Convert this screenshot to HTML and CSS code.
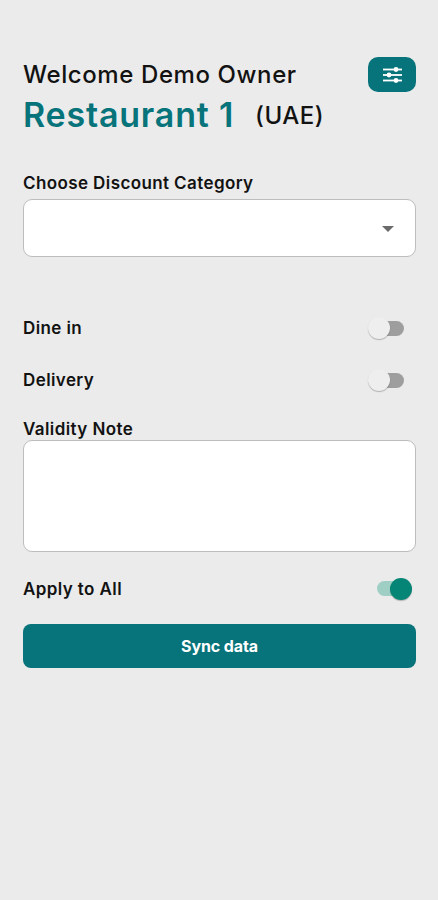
FILE: index.html
```html
<!DOCTYPE html>
<html lang="en">
<head>
  <meta charset="UTF-8">
  <meta name="viewport" content="width=device-width, initial-scale=1.0">
  <title>Restaurant 1</title>
  <link rel="stylesheet" href="styles.css">
</head>
<body>
  <header class="header">
    <div>
      <div class="welcome">Welcome Demo Owner</div>
      <div class="restaurant">
        <h1 class="name">Restaurant 1</h1>
        <span class="country">(UAE)</span>
      </div>
    </div>
    <button class="filter-btn" aria-label="Settings">
      <svg width="19" height="16" viewBox="0 0 19 16" fill="#fff">
        <rect x="0" y="1.6" width="19" height="1.8"/>
        <rect x="0" y="7.1" width="19" height="1.8"/>
        <rect x="0" y="12.6" width="19" height="1.8"/>
        <circle cx="13" cy="2.5" r="2.4"/>
        <circle cx="6" cy="8" r="2.4"/>
        <circle cx="13" cy="13.5" r="2.4"/>
      </svg>
    </button>
  </header>

  <!-- Discount category -->
  <div class="label category-label">Choose Discount Category</div>
  <div class="select"><span class="arrow"></span></div>

  <!-- Order types -->
  <div class="row dine-in">
    <span class="label">Dine in</span>
    <span class="switch"></span>
  </div>
  <div class="row">
    <span class="label">Delivery</span>
    <span class="switch"></span>
  </div>

  <div class="label note-label">Validity Note</div>
  <textarea class="note" aria-label="Validity Note"></textarea>

  <div class="row apply">
    <span class="label">Apply to All</span>
    <span class="switch on"></span>
  </div>
  <button class="sync-btn">Sync data</button>
</body>
</html>
```

FILE: styles.css
```css
* {
  box-sizing: border-box;
}
body {
  margin: 0;
  padding: 57px 22px 0 23px;
  min-height: 100vh;
  background-color: #ebebeb;
  color: #121212;
  font-family: Inter, "Liberation Sans", sans-serif;
}
.header {
  display: flex;
  justify-content: space-between;
  align-items: flex-start;
  height: 80px;
}
.welcome {
  font-size: 24px;
  font-weight: 500;
  line-height: 36px;
  letter-spacing: 0.6px;
  white-space: nowrap;
}
.restaurant {
  display: flex;
  align-items: center;
  gap: 21px;
  line-height: 44px;
  white-space: nowrap;
}
.name {
  margin: 0;
  font-size: 34px;
  font-weight: 600;
  letter-spacing: 0.8px;
  color: #07737a;
}
.country {
  padding-top: 2px;
  font-size: 24px;
  font-weight: 500;
  line-height: 42px;
  letter-spacing: 0.5px;
}
.filter-btn {
  display: flex;
  align-items: center;
  justify-content: center;
  flex: none;
  width: 48px;
  height: 35px;
  padding: 0 0 0 1px;
  border: none;
  border-radius: 10px;
  background-color: #07737a;
}
.label {
  font-size: 17px;
  font-weight: 600;
  line-height: 24px;
  letter-spacing: 0.4px;
  white-space: nowrap;
}
.category-label {
  margin-top: 34px;
}
.select {
  display: flex;
  align-items: center;
  justify-content: flex-end;
  height: 58px;
  margin-top: 4px;
  padding-right: 21px;
  border: 1px solid #bdbdbd;
  border-radius: 9px;
  background-color: #fff;
}
.arrow {
  margin-top: 1px;
  border: 6px solid transparent;
  border-top-color: #6b6b6b;
  border-bottom: none;
}
.row {
  display: flex;
  align-items: center;
  justify-content: space-between;
  height: 52px;
}
.dine-in {
  margin-top: 45px;
}
.switch {
  display: flex;
  align-items: center;
  width: 30px;
  height: 15px;
  margin-right: 12px;
  border-radius: 8px;
  background-color: #9e9e9e;
}
.switch::before {
  content: "";
  flex: none;
  width: 22px;
  height: 22px;
  margin-left: -6px;
  border-radius: 50%;
  background-color: #eeeeee;
  box-shadow: 0 1px 1px rgba(0, 0, 0, 0.25);
}
.switch.on {
  justify-content: flex-end;
  margin-right: 9px;
  background-color: #9fcfc4;
}
.switch.on::before {
  margin-right: -5px;
  background-color: #058575;
}
.note-label {
  margin-top: 11px;
}
.note {
  display: block;
  width: 100%;
  height: 112px;
  margin-top: -1px;
  border: 1px solid #bdbdbd;
  border-radius: 9px;
  background-color: #fff;
  resize: none;
}
.apply {
  height: 72px;
}
.apply .label {
  padding-top: 2px;
}
.apply .switch {
  margin-top: 1px;
}
.sync-btn {
  display: block;
  width: 100%;
  height: 44px;
  border: none;
  border-radius: 8px;
  background-color: #07737a;
  color: #fff;
  font-family: inherit;
  font-size: 16px;
  font-weight: 700;
  letter-spacing: -0.1px;
}
```
